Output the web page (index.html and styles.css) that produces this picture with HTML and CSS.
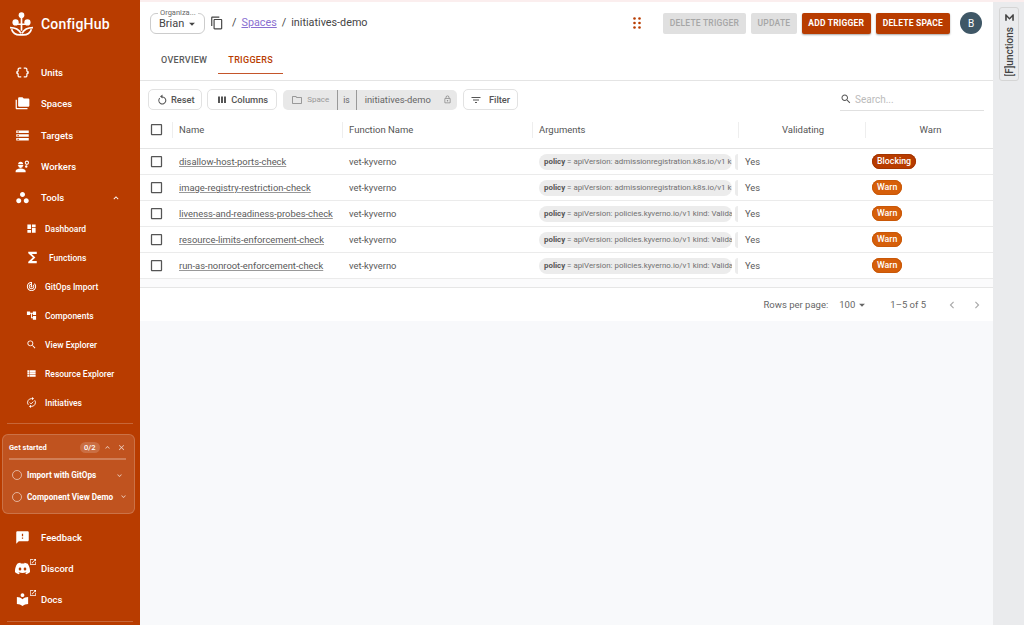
FILE: index.html
```html
<!DOCTYPE html>
<html>
<head>
<meta charset="utf-8">
<title>ConfigHub</title>
<link rel="stylesheet" href="styles.css">
</head>
<body>

<svg class="sprite" width="0" height="0">
  <symbol id="i-units" viewBox="0 0 24 24"><path d="M4 7v2c0 .55-.45 1-1 1H2v4h1c.55 0 1 .45 1 1v2c0 1.65 1.35 3 3 3h3v-2H7c-.55 0-1-.45-1-1v-2c0-1.3-.84-2.42-2-2.83v-.34C5.16 11.42 6 10.3 6 9V7c0-.55.45-1 1-1h3V4H7C5.35 4 4 5.35 4 7zm17 3c-.55 0-1-.45-1-1V7c0-1.65-1.35-3-3-3h-3v2h3c.55 0 1 .45 1 1v2c0 1.3.84 2.42 2 2.83v.34c-1.16.41-2 1.52-2 2.83v2c0 .55-.45 1-1 1h-3v2h3c1.65 0 3-1.35 3-3v-2c0-.55.45-1 1-1h1v-4h-1z"/></symbol>
  <symbol id="i-spaces" viewBox="0 0 24 24"><path d="M3 19h17v2H3c-1.1 0-2-.9-2-2V6h2v13zM23 6v9c0 1.1-.9 2-2 2H7c-1.1 0-2-.9-2-2l.01-11c0-1.1.89-2 1.99-2h5l2 2h7c1.1 0 2 .9 2 2z"/></symbol>
  <symbol id="i-targets" viewBox="0 0 24 24"><path d="M2 20h20v-4H2v4zm2-3h2v2H4v-2zM2 4v4h20V4H2zm4 3H4V5h2v2zm-4 7h20v-4H2v4zm2-3h2v2H4v-2z"/></symbol>
  <symbol id="i-workers" viewBox="0 0 24 24"><path d="M9 15c-2.67 0-8 1.34-8 4v2h16v-2c0-2.66-5.33-4-8-4z"/><path d="M4.500 9.500h9v1h-.6a3.900 3.900 0 0 1-7.800 0h-.6zM5 8.500a4 4 0 0 1 8 0z"/><circle cx="19" cy="6" r="2.600" fill="none" stroke="currentColor" stroke-width="1.700"/><circle cx="18" cy="12" r="1.900"/></symbol>
  <symbol id="i-tools" viewBox="0 0 24 24"><path d="M6 13c-2.200 0-4 1.800-4 4s1.800 4 4 4 4-1.800 4-4-1.800-4-4-4zm12 0c-2.200 0-4 1.800-4 4s1.800 4 4 4 4-1.800 4-4-1.800-4-4-4zM12 3C9.800 3 8 4.800 8 7s1.800 4 4 4 4-1.800 4-4-1.800-4-4-4z"/></symbol>
  <symbol id="i-dashboard" viewBox="0 0 24 24"><path d="M3 13h8V3H3v10zm0 8h8v-6H3v6zm10 0h8V11h-8v10zm0-18v6h8V3h-8z"/></symbol>
  <symbol id="i-functions" viewBox="0 0 24 24"><path d="M18 4H6v2l6.500 6L6 18v2h12v-3h-7l5-5-5-5h7z"/></symbol>
  <symbol id="i-gitops" viewBox="0 0 24 24"><path d="M19.07 4.93l-1.41 1.41C19.1 7.79 20 9.79 20 12c0 4.42-3.58 8-8 8s-8-3.58-8-8c0-4.08 3.05-7.44 7-7.93v2.02C8.16 6.57 6 9.03 6 12c0 3.31 2.69 6 6 6s6-2.69 6-6c0-1.66-.67-3.16-1.76-4.24l-1.41 1.41C15.55 9.9 16 10.9 16 12c0 2.21-1.79 4-4 4s-4-1.79-4-4c0-1.86 1.28-3.41 3-3.86v2.14c-.6.35-1 .98-1 1.72 0 1.1.9 2 2 2s2-.9 2-2c0-.74-.4-1.38-1-1.72V2h-1C6.48 2 2 6.48 2 12s4.48 10 10 10 10-4.48 10-10c0-2.76-1.12-5.26-2.93-7.07z"/></symbol>
  <symbol id="i-components" viewBox="0 0 24 24"><path d="M22 11V3h-7v3H9V3H2v8h7V8h2v10h4v3h7v-8h-7v3h-2V8h2v3z"/></symbol>
  <symbol id="i-search" viewBox="0 0 24 24"><path d="M15.5 14h-.79l-.28-.27C15.41 12.59 16 11.11 16 9.5 16 5.91 13.09 3 9.5 3S3 5.91 3 9.5 5.91 16 9.5 16c1.61 0 3.09-.59 4.23-1.57l.27.28v.79l5 4.99L20.49 19l-4.99-5zm-6 0C7.01 14 5 11.99 5 9.5S7.01 5 9.5 5 14 7.01 14 9.5 11.99 14 9.5 14z"/></symbol>
  <symbol id="i-list" viewBox="0 0 24 24"><path d="M3 14h4v-4H3v4zm0 5h4v-4H3v4zM3 9h4V5H3v4zm5 5h13v-4H8v4zm0 5h13v-4H8v4zM8 5v4h13V5H8z"/></symbol>
  <symbol id="i-initiatives" viewBox="0 0 24 24"><path d="M5 17A8.500 8.500 0 0 1 12 3.500h2M19 7A8.500 8.500 0 0 1 12 20.500h-2" fill="none" stroke="currentColor" stroke-width="2"/><path d="M13 0l4.500 3.500L13 7zM11 17l-4.500 3.500L11 24z"/><path d="M8 12l3 3 5-5" fill="none" stroke="currentColor" stroke-width="2"/></symbol>
  <symbol id="i-feedback" viewBox="0 0 24 24"><path d="M20 2H4c-1.1 0-1.99.9-1.99 2L2 22l4-4h14c1.1 0 2-.9 2-2V4c0-1.1-.9-2-2-2zm-7 12h-2v-2h2v2zm0-4h-2V6h2v4z"/></symbol>
  <symbol id="i-discord" viewBox="0 0 24 24"><path d="M20.317 4.3698a19.7913 19.7913 0 00-4.8851-1.5152.0741.0741 0 00-.0785.0371c-.211.3753-.4447.8648-.6083 1.2495-1.8447-.2762-3.68-.2762-5.4868 0-.1636-.3933-.4058-.8742-.6177-1.2495a.077.077 0 00-.0785-.037 19.7363 19.7363 0 00-4.8852 1.515.0699.0699 0 00-.0321.0277C.5334 9.0458-.319 13.5799.0992 18.0578a.0824.0824 0 00.0312.0561c2.0528 1.5076 4.0413 2.4228 5.9929 3.0294a.0777.0777 0 00.0842-.0276c.4616-.6304.8731-1.2952 1.226-1.9942a.076.076 0 00-.0416-.1057c-.6528-.2476-1.2743-.5495-1.8722-.8923a.077.077 0 01-.0076-.1277c.1258-.0943.2517-.1923.3718-.2914a.0743.0743 0 01.0776-.0105c3.9278 1.7933 8.18 1.7933 12.0614 0a.0739.0739 0 01.0785.0095c.1202.099.246.1981.3728.2924a.077.077 0 01-.0066.1276 12.2986 12.2986 0 01-1.873.8914.0766.0766 0 00-.0407.1067c.3604.698.7719 1.3628 1.225 1.9932a.076.076 0 00.0842.0286c1.961-.6067 3.9495-1.5219 6.0023-3.0294a.077.077 0 00.0313-.0552c.5004-5.177-.8382-9.6739-3.5485-13.6604a.061.061 0 00-.0312-.0286zM8.02 15.3312c-1.1825 0-2.1569-1.0857-2.1569-2.419 0-1.3332.9555-2.4189 2.157-2.4189 1.2108 0 2.1757 1.0952 2.1568 2.419 0 1.3332-.9555 2.4189-2.1569 2.4189zm7.9748 0c-1.1825 0-2.1569-1.0857-2.1569-2.419 0-1.3332.9554-2.4189 2.1569-2.4189 1.2108 0 2.1757 1.0952 2.1568 2.419 0 1.3332-.946 2.4189-2.1568 2.4189Z"/></symbol>
  <symbol id="i-docs" viewBox="0 0 24 24"><path d="M12 11.55C9.64 9.35 6.48 8 3 8v11c3.48 0 6.64 1.35 9 3.55 2.36-2.19 5.52-3.55 9-3.55V8c-3.48 0-6.64 1.35-9 3.55zM12 8c1.66 0 3-1.34 3-3s-1.34-3-3-3-3 1.34-3 3 1.34 3 3 3z"/></symbol>
  <symbol id="i-open" viewBox="0 0 24 24"><path d="M19 19H5V5h7V3H5c-1.11 0-2 .9-2 2v14c0 1.1.89 2 2 2h14c1.1 0 2-.9 2-2v-7h-2v7zM14 3v2h3.59l-9.83 9.83 1.41 1.41L19 6.41V10h2V3h-7z"/></symbol>
  <symbol id="i-copy" viewBox="0 0 24 24"><path d="M16 1H4c-1.1 0-2 .9-2 2v14h2V3h12V1zm3 4H8c-1.1 0-2 .9-2 2v14c0 1.1.9 2 2 2h11c1.1 0 2-.9 2-2V7c0-1.1-.9-2-2-2zm0 16H8V7h11v14z"/></symbol>
  <symbol id="i-reset" viewBox="0 0 24 24"><path d="M13 5V1L8 5l5 4V7c3.310 0 5.500 2.690 5.500 6s-2.690 6-6 6-6-2.690-6-6c0-1.600.6-3 1.700-4.100L6.800 7.500A8 8 0 1 0 13 5z"/></symbol>
  <symbol id="i-columns" viewBox="0 0 24 24"><path d="M10 18h4V5h-4v13zm-6 0h4V5H4v13zM16 5v13h4V5h-4z"/></symbol>
  <symbol id="i-filter" viewBox="0 0 24 24"><path d="M10 18h4v-2h-4v2zM3 6v2h18V6H3zm3 7h12v-2H6v2z"/></symbol>
  <symbol id="i-folder" viewBox="0 0 24 24"><path d="M9.17 6l2 2H20v10H4V6h5.17M10 4H4c-1.1 0-1.99.9-1.99 2L2 18c0 1.1.9 2 2 2h16c1.1 0 2-.9 2-2V8c0-1.1-.9-2-2-2h-8l-2-2z"/></symbol>
  <symbol id="i-lock" viewBox="0 0 24 24"><path d="M18 8h-1V6c0-2.76-2.24-5-5-5S7 3.24 7 6v2H6c-1.1 0-2 .9-2 2v10c0 1.1.9 2 2 2h12c1.1 0 2-.9 2-2V10c0-1.1-.9-2-2-2zM9 6c0-1.66 1.34-3 3-3s3 1.34 3 3v2H9V6zm9 14H6V10h12v10zm-6-3c1.1 0 2-.9 2-2s-.9-2-2-2-2 .9-2 2 .9 2 2 2z"/></symbol>
  <symbol id="i-box" viewBox="0 0 24 24"><path d="M19 5v14H5V5h14m0-2H5c-1.1 0-2 .9-2 2v14c0 1.1.9 2 2 2h14c1.1 0 2-.9 2-2V5c0-1.1-.9-2-2-2z"/></symbol>
  <symbol id="i-up" viewBox="0 0 24 24"><path d="M12 8l-6 6 1.41 1.41L12 10.83l4.59 4.58L18 14z"/></symbol>
  <symbol id="i-down" viewBox="0 0 24 24"><path d="M16.59 8.59 12 13.17 7.41 8.59 6 10l6 6 6-6z"/></symbol>
  <symbol id="i-close" viewBox="0 0 24 24"><path d="M19 6.410 17.590 5 12 10.590 6.410 5 5 6.410 10.590 12 5 17.590 6.410 19 12 13.410 17.590 19 19 17.590 13.410 12z"/></symbol>
  <symbol id="i-left" viewBox="0 0 24 24"><path d="M15.41 7.41 14 6l-6 6 6 6 1.41-1.41L10.83 12z"/></symbol>
  <symbol id="i-right" viewBox="0 0 24 24"><path d="M10 6 8.59 7.41 13.17 12l-4.58 4.59L10 18l6-6z"/></symbol>
  <symbol id="i-caret" viewBox="0 0 24 24"><path d="M7 10l5 5 5-5z"/></symbol>
</svg>

<div class="app">

  <!-- left nav -->
  <div class="sidebar">
    <div class="brand">
      <svg class="logo" viewBox="0 0 24 24">
        <circle cx="12" cy="3" r="2.700"/>
        <circle cx="6.300" cy="10" r="3"/>
        <circle cx="17.700" cy="10" r="3"/>
        <path d="M11.200 5h1.600v13h-1.600zM8 11h3.500v1.500H8zM12.500 11H16v1.500h-3.500z"/>
        <path d="M1 15c4.500 0 8.500 1.500 10.500 5.500M23 15c-4.500 0-8.500 1.500-10.500 5.500M2.500 16.500c1 3.500 4 5.500 8 5.500h3c4 0 7-2 8-5.500" fill="none" stroke="currentColor" stroke-width="1.600"/>
      </svg>
      <span>ConfigHub</span>
    </div>

    <div class="nav">
      <a class="nav-item"><svg class="nav-icon"><use href="#i-units"/></svg>Units</a>
      <a class="nav-item"><svg class="nav-icon"><use href="#i-spaces"/></svg>Spaces</a>
      <a class="nav-item"><svg class="nav-icon"><use href="#i-targets"/></svg>Targets</a>
      <a class="nav-item"><svg class="nav-icon"><use href="#i-workers"/></svg>Workers</a>
      <a class="nav-item"><svg class="nav-icon"><use href="#i-tools"/></svg>Tools<svg class="nav-chev"><use href="#i-up"/></svg></a>
    </div>

    <div class="subnav">
      <a class="sub-item"><svg class="sub-icon"><use href="#i-dashboard"/></svg>Dashboard</a>
      <a class="sub-item sub-fn"><svg class="sub-icon"><use href="#i-functions"/></svg>Functions</a>
      <a class="sub-item"><svg class="sub-icon"><use href="#i-gitops"/></svg>GitOps Import</a>
      <a class="sub-item"><svg class="sub-icon"><use href="#i-components"/></svg>Components</a>
      <a class="sub-item"><svg class="sub-icon"><use href="#i-search"/></svg>View Explorer</a>
      <a class="sub-item"><svg class="sub-icon"><use href="#i-list"/></svg>Resource Explorer</a>
      <a class="sub-item"><svg class="sub-icon"><use href="#i-initiatives"/></svg>Initiatives</a>
    </div>

    <div class="side-rule"></div>

    <div class="started">
      <div class="started-head">
        <span class="started-title">Get started</span>
        <span class="started-count">0/2</span>
        <svg class="mini"><use href="#i-up"/></svg>
        <svg class="mini"><use href="#i-close"/></svg>
      </div>
      <div class="started-bar"></div>
      <div class="started-row started-row-short"><span class="ring"></span>Import with GitOps<svg class="mini"><use href="#i-down"/></svg></div>
      <div class="started-row"><span class="ring"></span>Component View Demo<svg class="mini"><use href="#i-down"/></svg></div>
    </div>

    <div class="nav nav-bottom">
      <a class="nav-item"><svg class="nav-icon"><use href="#i-feedback"/></svg>Feedback</a>
      <a class="nav-item"><span class="ext"><svg class="nav-icon"><use href="#i-discord"/></svg><svg class="ext-badge"><use href="#i-open"/></svg></span>Discord</a>
      <a class="nav-item"><span class="ext"><svg class="nav-icon"><use href="#i-docs"/></svg><svg class="ext-badge"><use href="#i-open"/></svg></span>Docs</a>
    </div>
    <div class="side-rule side-rule-end"></div>
  </div>

  <!-- page -->
  <div class="main">
    <div class="panel">
      <div class="topbar">
        <div class="org">
          <span class="org-label">Organiza...</span>
          <span>Brian</span>
          <svg class="caret"><use href="#i-caret"/></svg>
        </div>
        <svg class="copy"><use href="#i-copy"/></svg>
        <div class="crumbs">
          <span>/</span><a class="crumb-link">Spaces</a><span>/</span><span>initiatives-demo</span>
        </div>
        <svg class="dots" viewBox="0 0 8 12" fill="currentColor">
          <circle cx="1.500" cy="1.500" r="1.300"/><circle cx="6.500" cy="1.500" r="1.300"/>
          <circle cx="1.500" cy="6" r="1.300"/><circle cx="6.500" cy="6" r="1.300"/>
          <circle cx="1.500" cy="10.500" r="1.300"/><circle cx="6.500" cy="10.500" r="1.300"/>
        </svg>
        <button class="btn btn-off btn-first">DELETE TRIGGER</button>
        <button class="btn btn-off">UPDATE</button>
        <button class="btn btn-on">ADD TRIGGER</button>
        <button class="btn btn-on btn-last">DELETE SPACE</button>
        <div class="avatar">B</div>
      </div>

      <div class="tabs">
        <div class="tab">OVERVIEW</div>
        <div class="tab tab-active">TRIGGERS</div>
      </div>

      <div class="toolbar">
        <button class="tool"><svg><use href="#i-reset"/></svg>Reset</button>
        <button class="tool tool-columns"><svg><use href="#i-columns"/></svg>Columns</button>
        <div class="scope">
          <span class="scope-key"><svg><use href="#i-folder"/></svg>Space</span>
          <span class="scope-op">is</span>
          <span class="scope-val">initiatives-demo<svg><use href="#i-lock"/></svg></span>
        </div>
        <button class="tool tool-filter"><svg><use href="#i-filter"/></svg>Filter</button>
        <div class="search"><svg><use href="#i-search"/></svg>Search...</div>
      </div>

      <div class="grid">
        <div class="row row-head">
          <div class="cell cell-check"><svg class="check"><use href="#i-box"/></svg></div>
          <div class="cell head-cell">Name</div>
          <div class="cell head-cell">Function Name</div>
          <div class="cell head-cell">Arguments</div>
          <div class="cell head-cell head-center">Validating</div>
          <div class="cell head-cell head-center">Warn</div>
        </div>

        <div class="row">
          <div class="cell cell-check"><svg class="check"><use href="#i-box"/></svg></div>
          <div class="cell"><a class="name-link">disallow-host-ports-check</a></div>
          <div class="cell">vet-kyverno</div>
          <div class="cell cell-args"><span class="arg"><b>policy</b> = apiVersion: admissionregistration.k8s.io/v1 k</span><span class="arg-next"></span></div>
          <div class="cell">Yes</div>
          <div class="cell cell-pill"><span class="pill pill-block">Blocking</span></div>
        </div>
        <div class="row">
          <div class="cell cell-check"><svg class="check"><use href="#i-box"/></svg></div>
          <div class="cell"><a class="name-link">image-registry-restriction-check</a></div>
          <div class="cell">vet-kyverno</div>
          <div class="cell cell-args"><span class="arg"><b>policy</b> = apiVersion: admissionregistration.k8s.io/v1 k</span><span class="arg-next"></span></div>
          <div class="cell">Yes</div>
          <div class="cell cell-pill"><span class="pill pill-warn">Warn</span></div>
        </div>
        <div class="row">
          <div class="cell cell-check"><svg class="check"><use href="#i-box"/></svg></div>
          <div class="cell"><a class="name-link">liveness-and-readiness-probes-check</a></div>
          <div class="cell">vet-kyverno</div>
          <div class="cell cell-args"><span class="arg"><b>policy</b> = apiVersion: policies.kyverno.io/v1 kind: Valida</span><span class="arg-next"></span></div>
          <div class="cell">Yes</div>
          <div class="cell cell-pill"><span class="pill pill-warn">Warn</span></div>
        </div>
        <div class="row">
          <div class="cell cell-check"><svg class="check"><use href="#i-box"/></svg></div>
          <div class="cell"><a class="name-link">resource-limits-enforcement-check</a></div>
          <div class="cell">vet-kyverno</div>
          <div class="cell cell-args"><span class="arg"><b>policy</b> = apiVersion: policies.kyverno.io/v1 kind: Valida</span><span class="arg-next"></span></div>
          <div class="cell">Yes</div>
          <div class="cell cell-pill"><span class="pill pill-warn">Warn</span></div>
        </div>
        <div class="row">
          <div class="cell cell-check"><svg class="check"><use href="#i-box"/></svg></div>
          <div class="cell"><a class="name-link">run-as-nonroot-enforcement-check</a></div>
          <div class="cell">vet-kyverno</div>
          <div class="cell cell-args"><span class="arg"><b>policy</b> = apiVersion: policies.kyverno.io/v1 kind: Valida</span><span class="arg-next"></span></div>
          <div class="cell">Yes</div>
          <div class="cell cell-pill"><span class="pill pill-warn">Warn</span></div>
        </div>
        <div class="grid-filler"></div>
      </div>

      <div class="pager">
        <span>Rows per page:</span>
        <span class="pager-size">100<svg class="caret"><use href="#i-caret"/></svg></span>
        <span class="pager-range">1–5 of 5</span>
        <svg class="pager-arrow"><use href="#i-left"/></svg>
        <svg class="pager-arrow"><use href="#i-right"/></svg>
      </div>
    </div>
  </div>

  <!-- right strip -->
  <div class="strip">
    <div class="strip-btn">
      <svg><use href="#i-functions"/></svg>
      <span>[F]unctions</span>
    </div>
  </div>

</div>

</body>
</html>
```

FILE: styles.css
```css
html, body {
    margin: 0;
    height: 100%;
    overflow: hidden;
}

body {
    font-family: Roboto, "Liberation Sans", sans-serif;
    color: #5a5a5a;
    background-color: #f8f9fb;
}

svg {
    fill: currentColor;
    display: block;
    flex: none;
}

.sprite {
    position: absolute;
}

.app {
    display: flex;
    height: 625px;
    border-top: 2px solid #fbeeee;
    box-sizing: border-box;
}

/* left nav */
.sidebar {
    width: 140px;
    flex: none;
    margin-top: -2px;
    height: 625px;
    background-color: #b83c00;
    color: #fff;
    display: flex;
    flex-direction: column;
    box-sizing: border-box;
}

.brand {
    display: flex;
    align-items: center;
    gap: 7px;
    padding-left: 9px;
    height: 48px;
    box-sizing: border-box;
    font-size: 14px;
    font-weight: 500;
    letter-spacing: 0.2px;
}

.logo {
    width: 25px;
    height: 25px;
}

.nav {
    margin-top: 9px;
}

.nav-item {
    display: flex;
    align-items: center;
    height: 31.3px;
    padding-left: 15px;
    font-size: 9.5px;
    font-weight: 500;
}

.nav-icon {
    width: 15px;
    height: 15px;
    margin-right: 11px;
}

.nav-chev {
    width: 10px;
    height: 10px;
    margin-left: auto;
    margin-right: 19px;
}

.subnav {
    margin-top: 1px;
}

.sub-item {
    display: flex;
    align-items: center;
    height: 29px;
    padding-left: 26px;
    font-size: 8.5px;
    font-weight: 500;
}

.sub-icon {
    width: 11px;
    height: 11px;
    margin-right: 8px;
}

.sub-fn .sub-icon {
    width: 17px;
    height: 17px;
    margin-left: -2px;
    margin-right: 8px;
}

.side-rule {
    height: 1px;
    margin: 6px 7px 0;
    background-color: rgba(255, 255, 255, 0.22);
}

.started {
    margin: 10px 5px 0 2px;
    height: 80px;
    box-sizing: border-box;
    padding: 6px 6px 0 6px;
    border: 1px solid rgba(255, 255, 255, 0.18);
    border-radius: 6px;
    background-color: rgba(255, 255, 255, 0.12);
}

.started-head {
    display: flex;
    align-items: center;
    height: 12px;
    padding-right: 2px;
    font-size: 7.5px;
    font-weight: 700;
}

.started-title {
    flex: 1;
}

.started-count {
    padding: 1px 4px;
    border-radius: 7px;
    background-color: rgba(255, 255, 255, 0.16);
    font-weight: 500;
    margin-right: -1.5px;
}

.mini {
    width: 9px;
    height: 9px;
    opacity: 0.7;
    margin-left: 5px;
}

.started-bar {
    height: 2px;
    margin-top: 5px;
    margin-right: 2px;
    margin-bottom: 4px;
    background-color: rgba(255, 255, 255, 0.25);
}

.started-row {
    display: flex;
    align-items: center;
    height: 21.5px;
    padding-left: 3px;
    font-size: 8.2px;
    font-weight: 700;
    white-space: nowrap;
}

.started-row .mini {
    margin-left: auto;
}

.started-row-short {
    padding-right: 4px;
}

.ring {
    width: 8px;
    height: 8px;
    border: 1px solid rgba(255, 255, 255, 0.55);
    border-radius: 50%;
    margin-right: 5px;
    flex: none;
}

.nav-bottom {
    margin-top: 7px;
}

.ext {
    position: relative;
}

.ext-badge {
    position: absolute;
    top: -3px;
    right: 4px;
    width: 8px;
    height: 8px;
}

.side-rule-end {
    margin-top: 6px;
}

/* page */
.main {
    flex: 1;
    min-width: 0;
}

.panel {
    background-color: #fff;
}

.topbar {
    display: flex;
    align-items: center;
    height: 42px;
    padding: 0 11px 0 10px;
}

.org {
    position: relative;
    width: 55px;
    height: 21px;
    box-sizing: border-box;
    margin-top: 1px;
    border: 1px solid #ccc;
    border-radius: 6px;
    display: flex;
    align-items: center;
    padding-left: 8px;
    font-size: 11px;
    color: #444;
}

.org-label {
    position: absolute;
    left: 7px;
    top: -6px;
    padding: 0 2px;
    background-color: #fff;
    font-size: 7.5px;
    color: #666;
}

.caret {
    width: 14px;
    height: 14px;
}

.org .caret {
    margin-left: 1px;
}

.copy {
    width: 14px;
    height: 14px;
    margin-left: 5px;
    color: #444;
}

.crumbs {
    display: flex;
    gap: 5px;
    margin-left: 8px;
    margin-bottom: 2px;
    font-size: 10.8px;
    color: #444;
}

.crumb-link {
    color: #8a6fd1;
    text-decoration: underline;
}

.dots {
    width: 8px;
    height: 12px;
    margin-left: auto;
    margin-right: 22px;
    margin-bottom: 1px;
    color: #b83c00;
}

.btn {
    height: 21px;
    border: none;
    border-radius: 2px;
    margin-left: 5px;
    padding: 0 6.5px;
    font-family: inherit;
    font-size: 8.5px;
    font-weight: 500;
    letter-spacing: 0.2px;
}

.btn-first {
    margin-left: 0;
    padding: 0 7px;
}

.btn-last {
    padding: 0 7px;
}

.btn-off {
    background-color: #e0e0e0;
    color: #a6a6a6;
}

.btn-on {
    background-color: #b83c00;
    color: #fff;
    font-weight: 700;
    box-shadow: 0 1px 2px rgba(0, 0, 0, 0.35);
}

.avatar {
    width: 22px;
    height: 22px;
    margin-left: 10px;
    border-radius: 50%;
    background-color: #3f5766;
    color: #fff;
    font-size: 10px;
    display: flex;
    align-items: center;
    justify-content: center;
}

.tabs {
    display: flex;
    height: 30px;
    padding-left: 11px;
    font-size: 9px;
    font-weight: 500;
    letter-spacing: 0.3px;
}

.tab {
    padding: 0 10px;
    line-height: 32px;
}

.tab-active {
    margin-left: 1px;
    color: #b83c00;
    border-bottom: 1px solid #c4552a;
}

.toolbar {
    display: flex;
    align-items: center;
    height: 37px;
    margin-top: 6px;
    padding: 0 9px 0 8px;
    border-top: 1px solid #e4e4e4;
}

.tool {
    display: flex;
    align-items: center;
    gap: 3.5px;
    height: 21px;
    padding: 0 6.5px;
    margin-right: 5px;
    background-color: #fff;
    border: 1px solid #e2e2e2;
    border-radius: 5px;
    font-family: inherit;
    font-size: 9.3px;
    font-weight: 500;
    color: #555;
}

.tool svg {
    width: 12px;
    height: 12px;
}

.tool-columns {
    padding: 0 7.5px;
}

.tool-filter {
    margin-left: 1px;
}

.tool-filter svg {
    margin-right: 3px;
}

.scope {
    display: flex;
    align-items: stretch;
    height: 20px;
    margin-left: 1.5px;
    margin-right: 5px;
    background-color: #e8e8e8;
    border-radius: 5px;
    font-size: 9.4px;
    color: #666;
}

.scope span {
    display: flex;
    align-items: center;
}

.scope-key {
    padding: 0 8px;
    gap: 4px;
    font-size: 8px;
    color: #999;
    border-right: 1px solid #999;
}

.scope-key svg {
    width: 12px;
    height: 12px;
}

.scope-op {
    padding: 0 6px 0 5px;
    border-right: 1px solid #999;
    font-size: 8.5px;
}

.scope-val {
    padding: 0 5px 0 8px;
    gap: 12px;
}

.scope-val svg {
    width: 9px;
    height: 9px;
    color: #888;
}

.search {
    margin-left: auto;
    width: 144px;
    height: 22px;
    box-sizing: border-box;
    border-bottom: 1px solid #e0e0e0;
    display: flex;
    align-items: center;
    gap: 3px;
    font-size: 10px;
    color: #bbb;
}

.search svg {
    width: 12px;
    height: 12px;
    color: #555;
}

/* table */
.grid {
    border-bottom: 1px solid #e6e6e6;
    font-size: 9.4px;
}

.row {
    display: grid;
    grid-template-columns: 32px 170px 190px 206px 127px 128px;
    height: 26px;
    box-sizing: border-box;
    border-bottom: 1px solid #ebebeb;
    align-items: center;
}

.row-head {
    height: 31px;
    padding-bottom: 7px;
    border-bottom: 1px solid #e4e4e4;
    font-size: 9.5px;
    color: #555;
}

.cell {
    padding-left: 7px;
    min-width: 0;
    white-space: nowrap;
}

.cell-check {
    padding-left: 9px;
}

.check {
    width: 15px;
    height: 15px;
    color: #555;
}

.head-cell {
    height: 16px;
    line-height: 16px;
    padding-left: 6px;
    border-left: 1px solid #eee;
}

.head-center {
    padding-left: 2px;
    text-align: center;
}

.name-link {
    text-decoration: underline;
    text-decoration-color: #999;
}

.cell-args {
    display: flex;
}

.arg {
    width: 193px;
    flex: none;
    box-sizing: border-box;
    height: 16px;
    line-height: 16px;
    padding-left: 5px;
    border-radius: 8px;
    background-color: #ececec;
    font-size: 7.9px;
    color: #707070;
    overflow: hidden;
}

.arg b {
    color: #555;
}

.arg-next {
    width: 3px;
    flex: none;
    height: 16px;
    margin-left: 3px;
    border-radius: 8px 0 0 8px;
    background-color: #ececec;
}

.pill {
    display: inline-block;
    height: 15px;
    line-height: 15px;
    padding: 0 5px;
    border-radius: 8px;
    color: #fff;
    font-size: 8.8px;
    font-weight: 500;
}

.pill-block {
    background-color: #b83c00;
    box-shadow: inset 0 0 0 1px #a33500;
}

.pill-warn {
    background-color: #d65f0a;
    box-shadow: inset 0 0 0 1px #c95808;
}

.grid-filler {
    height: 8px;
    background-color: #fbfbfc;
}

.pager {
    display: flex;
    align-items: center;
    justify-content: flex-end;
    height: 33px;
    padding-right: 9px;
    font-size: 9.5px;
    color: #666;
}

.pager-size {
    display: flex;
    align-items: center;
    margin-left: 11px;
}

.pager-range {
    margin-left: 21px;
    margin-right: 8px;
}

.pager-arrow {
    width: 14px;
    height: 14px;
    color: #aaa;
    margin-left: 11px;
}

/* right strip */
.strip {
    width: 31px;
    flex: none;
    background-color: #eaebed;
    padding: 5px 0 0 6px;
    box-sizing: border-box;
}

.strip-btn {
    width: 20px;
    height: 74px;
    box-sizing: border-box;
    border: 1px solid #d5d5d5;
    border-radius: 3px;
    display: flex;
    flex-direction: column;
    align-items: center;
    padding-top: 3px;
    gap: 3px;
    font-size: 10px;
    font-weight: 500;
    color: #444;
}

.strip-btn svg {
    width: 13px;
    height: 13px;
    transform: rotate(90deg);
}

.strip-btn span {
    writing-mode: vertical-rl;
    transform: rotate(180deg);
}
```
